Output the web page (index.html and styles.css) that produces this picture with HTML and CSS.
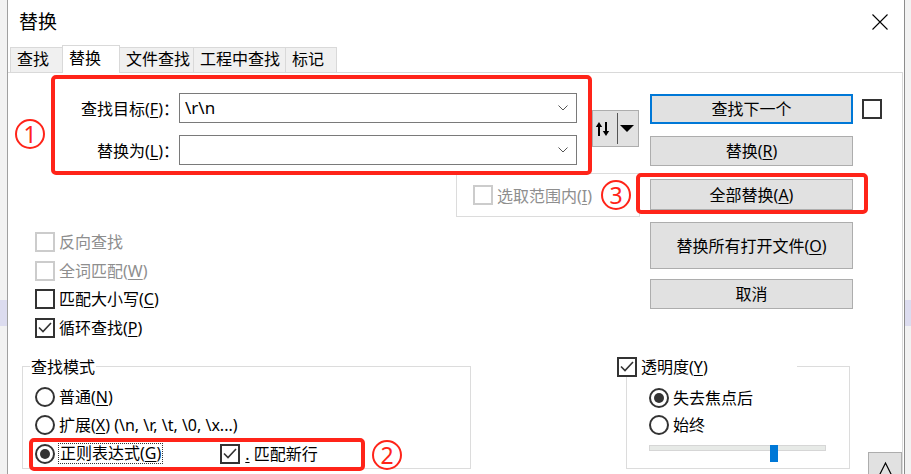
FILE: index.html
```html
<!DOCTYPE html>
<html lang="zh-CN">
<head>
<meta charset="utf-8">
<title>替换</title>
<link rel="stylesheet" href="styles.css">
</head>
<body>
<div class="window">
  <div class="titlebar">
    <span class="title">替换</span>
    <svg class="close" width="16" height="16" viewBox="0 0 16 16"><path d="M0.5 0.5L15.5 15.5M15.5 0.5L0.5 15.5" stroke="#000" stroke-width="1.1" fill="none"/></svg>
  </div>
  <div class="tabs">
    <div class="tab t1">查找</div>
    <div class="tab active t2">替换</div>
    <div class="tab t3">文件查找</div>
    <div class="tab t4">工程中查找</div>
    <div class="tab t5">标记</div>
  </div>
  <div class="panel">
    <div class="upper">
      <div class="leftcol">
        <div class="search-row">
          <div class="fields">
            <label class="flabel">查找目标(<u>F</u>)<span class="colon">：</span></label>
            <div class="combo"><span class="combo-text">\r\n</span><svg width="10" height="6" viewBox="0 0 10 6"><path d="M0.5 0.5L5 5L9.5 0.5" stroke="#555" stroke-width="1" fill="none"/></svg></div>
            <label class="flabel">替换为(<u>L</u>)<span class="colon">：</span></label>
            <div class="combo"><span class="combo-text"></span><svg width="10" height="6" viewBox="0 0 10 6"><path d="M0.5 0.5L5 5L9.5 0.5" stroke="#555" stroke-width="1" fill="none"/></svg></div>
          </div>
          <div class="swap">
            <svg width="15" height="16" viewBox="0 0 15 16"><path d="M4 15V4M11 1V12" stroke="#000" stroke-width="2"/><path d="M0.8 6L4 1L7.2 6Z M7.8 10L11 15L14.2 10Z" fill="#000"/></svg>
            <span class="sep"></span>
            <svg width="14" height="7" viewBox="0 0 14 7"><path d="M0 0H14L7 7Z" fill="#000"/></svg>
          </div>
        </div>
        <div class="scope">
          <span class="cb dis"></span><span class="dis-text">选取范围内(<u>I</u>)</span>
        </div>
        <div class="options">
          <div class="opt dis-text"><span class="cb dis"></span><span>反向查找</span></div>
          <div class="opt dis-text"><span class="cb dis"></span><span>全词匹配(<u>W</u>)</span></div>
          <div class="opt"><span class="cb"></span><span>匹配大小写(<u>C</u>)</span></div>
          <div class="opt"><span class="cb"><svg width="14" height="11" viewBox="0 0 14 11"><path d="M1 5.5L5 9.5L13 1" stroke="#333" stroke-width="1.6" fill="none"/></svg></span><span>循环查找(<u>P</u>)</span></div>
        </div>
      </div>
      <div class="buttons">
        <div class="btn default">查找下一个</div>
        <div class="btn b2"><span>替换(<u>R</u>)</span></div>
        <div class="btn b3"><span>全部替换(<u>A</u>)</span></div>
        <div class="btn b4"><span>替换所有打开文件(<u>O</u>)</span></div>
        <div class="btn b5">取消</div>
      </div>
      <span class="cb side"></span>
    </div>
    <div class="lower">
      <fieldset class="mode">
        <legend>查找模式</legend>
        <div class="rows">
          <div class="rrow"><span class="radio"></span><span>普通(<u>N</u>)</span></div>
          <div class="rrow"><span class="radio"></span><span>扩展(<u>X</u>) (\n, \r, \t, \0, \x...)</span></div>
          <div class="rrow r3"><span class="radio on"></span><span class="focus">正则表达式(<u>G</u>)</span><span class="cb nl"><svg width="14" height="11" viewBox="0 0 14 11"><path d="M1 5.5L5 9.5L13 1" stroke="#333" stroke-width="1.6" fill="none"/></svg></span><span class="nltext"><u>.</u> 匹配新行</span></div>
        </div>
      </fieldset>
      <fieldset class="trans">
        <legend><span class="cb"><svg width="14" height="11" viewBox="0 0 14 11"><path d="M1 5.5L5 9.5L13 1" stroke="#333" stroke-width="1.6" fill="none"/></svg></span><span>透明度(<u>Y</u>)</span></legend>
        <div class="trows">
          <div class="trow"><span class="radio on"></span><span>失去焦点后</span></div>
          <div class="trow t2r"><span class="radio"></span><span>始终</span></div>
          <div class="slider"><div class="track"></div><div class="thumb"></div></div>
        </div>
      </fieldset>
      <div class="upbtn"><svg width="32" height="22" viewBox="0 0 32 22"><path d="M10.5 22L16.5 10L22.5 22" stroke="#000" stroke-width="1.2" fill="none"/></svg></div>
    </div>
  </div>
  <div class="anno box1"></div>
  <div class="anno box3"></div>
  <div class="anno box2"></div>
  <div class="num n1">1</div>
  <div class="num n3">3</div>
  <div class="num n2">2</div>
</div>
</body>
</html>
```
FILE: styles.css
```css
* { box-sizing: border-box; }
html, body { margin: 0; }
body {
  width: 911px;
  height: 474px;
  overflow: hidden;
  background: linear-gradient(to bottom, #f2f2f2 0, #f2f2f2 300px, #dcdcef 300px, #dcdcef 326px, #f2f2f2 326px);
  font-family: "Noto Sans", "Noto Sans CJK SC", sans-serif;
  font-size: 16px;
  color: #000;
}
u { text-decoration-thickness: 1px; text-underline-offset: 2px; }

.window {
  position: relative;
  margin-left: 7px;
  width: 898px;
  height: 474px;
  background: #fff;
  border-left: 1px solid #a0a0a0;
  border-right: 1px solid #8c8c8c;
  overflow: hidden;
}

.titlebar {
  height: 45px;
  display: flex;
  align-items: center;
  justify-content: space-between;
  padding: 0 16px 1px 11px;
}
.title { font-size: 19px; line-height: 24px; }

.tabs {
  display: flex;
  align-items: flex-end;
  height: 27px;
  padding-left: 2px;
}
.tab {
  height: 25px;
  border: 1px solid #d9d9d9;
  border-bottom: none;
  background: #f0f0f0;
  padding-left: 6px;
  line-height: 23px;
  margin-right: -1px;
  white-space: nowrap;
}
.tab.active {
  height: 28px;
  background: #fff;
  margin-bottom: -1px;
  position: relative;
  z-index: 1;
  line-height: 25px;
}
.t1 { width: 53px; }
.t2 { width: 58px; }
.t3 { width: 75px; }
.t4 { width: 93px; }
.t5 { width: 52px; }

.panel {
  width: 895px;
  height: 402px;
  border-top: 1px solid #d9d9d9;
  border-right: 1px solid #d9d9d9;
}

.upper { display: flex; align-items: flex-start; }
.leftcol { width: 632px; flex: none; }

.search-row { display: flex; align-items: flex-start; margin-top: 20px; }
.fields {
  display: grid;
  grid-template-columns: 171px 398px;
  grid-auto-rows: 30px;
  row-gap: 12px;
  align-items: center;
}
.flabel { text-align: right; line-height: 20px; white-space: nowrap; }
.colon { font-family: "Noto Sans CJK TC", sans-serif; }
.combo {
  height: 30px;
  border: 1px solid #7a7a7a;
  display: flex;
  align-items: center;
  justify-content: space-between;
  padding: 0 8px 0 5px;
}
.combo-text { font-size: 17px; line-height: 20px; }

.swap {
  margin: 17px 0 0 15px;
  width: 47px;
  height: 37px;
  background: #e1e1e1;
  border: 1px solid #adadad;
  display: flex;
  align-items: center;
  padding-left: 2px;
}
.sep { width: 1px; height: 31px; background: #555; margin: 0 2px 0 7px; }

.scope {
  margin: 8px 0 0 448px;
  width: 184px;
  height: 44px;
  border: 1px solid #dcdcdc;
  display: flex;
  align-items: center;
  padding-left: 16px;
  gap: 4px;
}
.dis-text { color: #8e8e8e; }

.options { margin-top: 10.75px; padding-left: 27px; }
.opt { height: 28.5px; display: flex; align-items: center; gap: 4px; line-height: 20px; white-space: nowrap; }

.cb {
  width: 20px;
  height: 20px;
  border: 2px solid #333;
  background: #fff;
  flex: none;
  display: flex;
  align-items: center;
  justify-content: center;
}
.cb.dis { border-color: #cccccc; }

.buttons { margin: 21px 0 0 10px; width: 203px; flex: none; display: flex; flex-direction: column; }
.btn {
  height: 30px;
  background: #e1e1e1;
  border: 1px solid #adadad;
  display: flex;
  align-items: center;
  justify-content: center;
  line-height: 20px;
  white-space: nowrap;
}
.btn.default { border: 2px solid #0078d7; }
.b2 { margin-top: 12px; }
.b3 { margin-top: 13px; height: 31px; }
.b4 { margin-top: 12px; height: 47px; }
.b5 { margin-top: 10px; }
.side { margin: 26px 0 0 9px; }

.lower { display: flex; align-items: flex-start; margin-top: 15px; }
fieldset { margin: 0; padding: 0; border: 1px solid #dcdcdc; min-width: 0; }
legend { line-height: 20px; }

.mode { margin-left: 14px; width: 449px; height: 112px; }
.mode legend { margin-left: 7px; padding: 0 1px; }
.rows { padding: 6px 0 0 12px; }
.rrow { height: 28px; display: flex; align-items: center; gap: 4px; line-height: 20px; white-space: nowrap; }
.rrow.r3 { height: 30px; gap: 3px; }
.focus { border: 1px dotted #333; line-height: 19px; padding: 0 1px; }
.cb.nl { margin-left: 54px; }
.nltext { margin-left: 2px; }

.radio {
  width: 20px;
  height: 20px;
  border: 2px solid #333;
  border-radius: 50%;
  background: #fff;
  flex: none;
  display: flex;
  align-items: center;
  justify-content: center;
}
.radio.on::after {
  content: "";
  width: 10px;
  height: 10px;
  border-radius: 50%;
  background: #333;
}

.trans { margin-left: 155px; width: 224px; height: 112px; }
.trans legend {
  margin-left: -10px;
  width: 180px;
  height: 20px;
  padding: 0;
  background: #fff;
  display: flex;
  align-items: center;
  gap: 4px;
  white-space: nowrap;
}
.trows { padding: 7px 0 0 22px; }
.trow { height: 28px; display: flex; align-items: center; gap: 4px; line-height: 20px; }
.trow.t2r { height: 27px; }
.slider { position: relative; margin-top: 2px; width: 177px; height: 17px; }
.track { margin-top: 6px; height: 6px; background: #e7eae7; border: 1px solid #d6d6d6; }
.thumb { position: absolute; left: 121px; top: 0; width: 8px; height: 17px; background: #0078d7; }

.upbtn {
  margin: 95px 0 0 18px;
  width: 34px;
  height: 30px;
  background: #e1e1e1;
  border: 1px solid #adadad;
}
.upbtn svg { display: block; }

.anno {
  position: absolute;
  border: 4px solid #ff2419;
  border-radius: 5px;
}
.box1 { left: 43px; top: 75px; width: 541px; height: 100px; }
.box3 { left: 628px; top: 173px; width: 232px; height: 41px; }
.box2 { left: 21px; top: 438px; width: 336px; height: 33px; }

.num {
  position: absolute;
  width: 30px;
  height: 30px;
  border: 2px solid #ff2419;
  border-radius: 50%;
  color: #ff2419;
  font-family: "Noto Sans", sans-serif;
  font-size: 23px;
  line-height: 26px;
  text-align: center;
}
.n1 { left: 7px; top: 119px; }
.n3 { left: 593px; top: 180px; }
.n2 { left: 364px; top: 440px; }
```
